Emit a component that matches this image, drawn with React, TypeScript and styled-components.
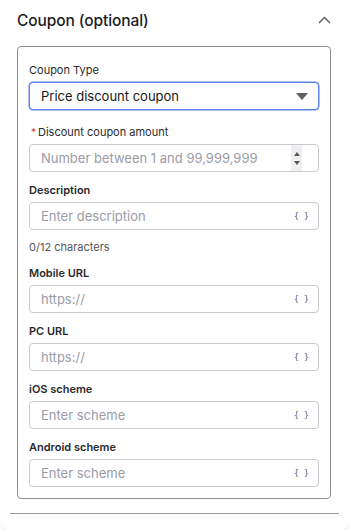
import React from 'react';
import styled, { createGlobalStyle, css } from 'styled-components';

const GlobalStyle = createGlobalStyle`
  html, body {
    margin: 0;
    padding: 0;
    background: #ffffff;
  }
  body {
    font-family: Inter, 'Noto Sans', 'Liberation Sans', sans-serif;
    color: #1c1c1f;
  }
  * {
    box-sizing: border-box;
  }
`;

const Panel = styled.div`
  width: 350px;
  height: 529px;
  padding: 0 11px 0 10px;
  border-radius: 0 0 8px 8px;
  background: #fff;
  box-shadow: 0 2px 1px -1px rgba(0, 0, 0, 0.1);
  display: flex;
  flex-direction: column;
`;

const Section = styled.section`
  padding: 0 8px 14px 7px;
  border-bottom: 1px solid #9a9aa3;
`;

const SectionHeader = styled.div`
  display: flex;
  align-items: center;
  justify-content: space-between;
  height: 46px;
  padding-bottom: 6px;
`;

const SectionTitle = styled.h2`
  margin: 0;
  font-size: 15.5px;
  font-weight: 500;
  color: #1c1c1f;
  letter-spacing: -0.1px;
`;

const Card = styled.div`
  border: 1px solid #8e8e98;
  border-radius: 4px;
  padding: 15px 11px 11px 11px;
  display: flex;
  flex-direction: column;
`;

const Field = styled.div<{ $gap?: number }>`
  display: flex;
  flex-direction: column;
  margin-bottom: ${({ $gap }) => ($gap ?? 10)}px;
  &:last-child {
    margin-bottom: 0;
  }
`;

const Label = styled.label<{ $bold?: boolean }>`
  display: flex;
  align-items: center;
  height: 16px;
  margin-bottom: 4px;
  font-size: 11px;
  color: #2a2a2e;
  font-weight: ${({ $bold }) => ($bold ? 600 : 400)};
`;

const Required = styled.span`
  color: #e0353b;
  font-size: 10px;
  margin-right: 2px;
  margin-left: 2px;
`;

const InputBox = styled.div<{ $focused?: boolean }>`
  position: relative;
  height: 28px;
  border: 1px solid #c9c9cf;
  border-radius: 4px;
  display: flex;
  align-items: center;
  padding: 0 0 0 11px;
  background: #fff;
  ${({ $focused }) =>
    $focused &&
    css`
      border: 1px solid #5b86f2;
      box-shadow: 0 0 0 0.5px #5b86f2;
    `}
`;

const Value = styled.span`
  flex: 1;
  font-size: 13px;
  color: #18181b;
`;

const Placeholder = styled.span`
  flex: 1;
  font-size: 13px;
  color: #9b9ba6;
`;

const Braces = styled.span`
  font-family: 'DejaVu Sans Mono', 'Liberation Mono', monospace;
  font-size: 8px;
  color: #55555c;
  margin-right: 9px;
  letter-spacing: 0.2px;
`;

const Spinner = styled.div`
  width: 11px;
  height: 26px;
  margin-right: 16px;
  background: #efeff1;
  display: flex;
  flex-direction: column;
  align-items: center;
  justify-content: center;
  gap: 5px;
`;

const Helper = styled.div`
  height: 16px;
  margin-top: 9px;
  font-size: 11px;
  color: #55555c;
  display: flex;
  align-items: center;
`;

const ChevronUp = () => (
  <svg width="13" height="8" viewBox="0 0 13 8" fill="none">
    <path d="M1 7 L6.5 1.5 L12 7" stroke="#55555c" strokeWidth="1.3" />
  </svg>
);

const Caret = () => (
  <svg width="12" height="7" viewBox="0 0 12 7" style={{ marginRight: 10 }}>
    <path d="M0 0 H12 L6 7 Z" fill="#5f5f66" />
  </svg>
);

const Tri = ({ up }: { up?: boolean }) => (
  <svg width="6" height="4" viewBox="0 0 6 4">
    <path d={up ? 'M0 4 H6 L3 0 Z' : 'M0 0 H6 L3 4 Z'} fill="#55555c" />
  </svg>
);

const textFields = [
  { label: 'Mobile URL', placeholder: 'https://' },
  { label: 'PC URL', placeholder: 'https://' },
  { label: 'iOS scheme', placeholder: 'Enter scheme' },
  { label: 'Android scheme', placeholder: 'Enter scheme' },
];

export default function App() {
  return (
    <>
      <GlobalStyle />
      <Panel>
        <Section>
          <SectionHeader>
            <SectionTitle>Coupon (optional)</SectionTitle>
            <ChevronUp />
          </SectionHeader>
          <Card>
            <Field $gap={14}>
              <Label>Coupon Type</Label>
              <InputBox $focused>
                <Value>Price discount coupon</Value>
                <Caret />
              </InputBox>
            </Field>
            <Field>
              <Label>
                <Required>*</Required>Discount coupon amount
              </Label>
              <InputBox>
                <Placeholder>Number between 1 and 99,999,999</Placeholder>
                <Spinner>
                  <Tri up />
                  <Tri />
                </Spinner>
              </InputBox>
            </Field>
            <Field>
              <Label $bold>Description</Label>
              <InputBox>
                <Placeholder>Enter description</Placeholder>
                <Braces>{'{ }'}</Braces>
              </InputBox>
              <Helper>0/12 characters</Helper>
            </Field>
            {textFields.map((f) => (
              <Field key={f.label}>
                <Label $bold>{f.label}</Label>
                <InputBox>
                  <Placeholder>{f.placeholder}</Placeholder>
                  <Braces>{'{ }'}</Braces>
                </InputBox>
              </Field>
            ))}
          </Card>
        </Section>
      </Panel>
    </>
  );
}
